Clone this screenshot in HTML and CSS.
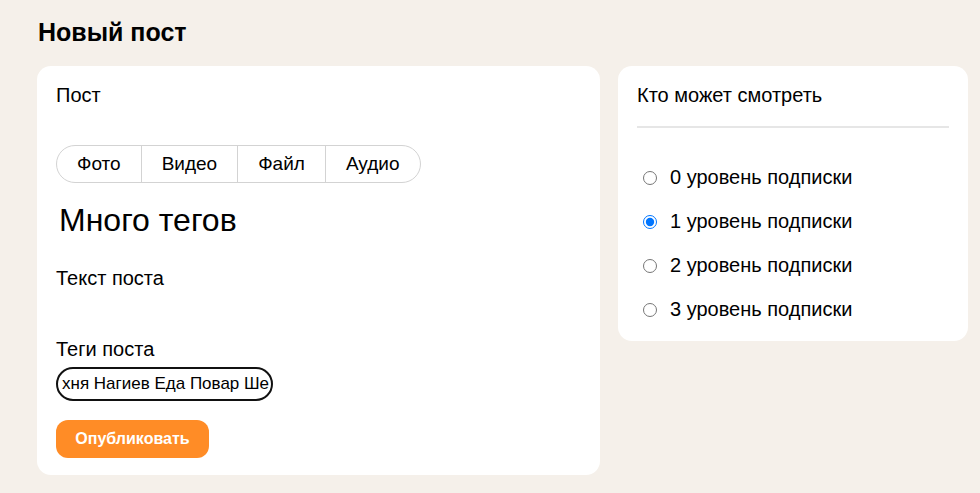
FILE: index.html
```html
<!DOCTYPE html>
<html lang="ru">
<head>
<meta charset="utf-8">
<link rel="stylesheet" href="styles.css">
</head>
<body>
<div class="page">
  <h1 class="title">Новый пост</h1>
  <div class="layout">
    <section class="card main">
      <div class="label">Пост</div>
      <div class="tabs">
        <div class="tab">Фото</div>
        <div class="tab">Видео</div>
        <div class="tab">Файл</div>
        <div class="tab">Аудио</div>
      </div>
      <div class="post-title">Много тегов</div>
      <div class="label text-label">Текст поста</div>
      <div class="label tags-label">Теги поста</div>
      <div class="tags-input"><span>хня Нагиев Еда Повар Ше</span></div>
      <button class="publish">Опубликовать</button>
    </section>
    <aside class="card side">
      <div class="side-title">Кто может смотреть</div>
      <div class="divider"></div>
      <div class="options">
        <label class="option"><input type="radio" name="lvl">0 уровень подписки</label>
        <label class="option"><input type="radio" name="lvl" checked>1 уровень подписки</label>
        <label class="option"><input type="radio" name="lvl">2 уровень подписки</label>
        <label class="option"><input type="radio" name="lvl">3 уровень подписки</label>
      </div>
    </aside>
  </div>
</div>
</body>
</html>
```

FILE: styles.css
```css
html, body {
  margin: 0;
  padding: 0;
  background: #f5f0ea;
  font-family: "Liberation Sans", Arial, sans-serif;
  color: #000;
}
.page {
  padding: 18px 12px 0 37px;
}
.title {
  margin: 0 0 19px 1px;
  font-size: 25px;
  font-weight: 700;
  line-height: 29px;
}
.layout {
  display: flex;
  align-items: flex-start;
  gap: 18px;
}
.card {
  background: #fff;
  border-radius: 14px;
  box-sizing: border-box;
}
.main {
  width: 563px;
  height: 409px;
  padding: 18px 19px;
}
.label {
  font-size: 20px;
  line-height: 23px;
}
.tabs {
  display: inline-flex;
  margin-top: 38px;
  border: 1px solid #d3d3d3;
  border-radius: 19px;
  height: 38px;
  box-sizing: border-box;
}
.tab {
  padding: 0 20px;
  font-size: 19px;
  line-height: 36px;
  border-left: 1px solid #d3d3d3;
}
.tab:first-child {
  border-left: none;
}
.post-title {
  margin: 19px 0 0 3px;
  font-size: 32px;
  line-height: 37px;
}
.text-label {
  margin-top: 28px;
}
.tags-label {
  margin-top: 48px;
}
.tags-input {
  margin-top: 6px;
  width: 217px;
  height: 34px;
  box-sizing: border-box;
  border: 2px solid #111;
  border-radius: 17px;
  padding: 0 4px;
  overflow: hidden;
  white-space: nowrap;
  font-size: 17px;
  line-height: 30px;
}
.publish {
  display: block;
  margin-top: 19px;
  height: 38px;
  width: 153px;
  padding: 0;
  border: none;
  border-radius: 12px;
  background: #ff8c26;
  color: #fff;
  font-family: "Liberation Sans", Arial, sans-serif;
  font-weight: 700;
  font-size: 16px;
}
.side {
  width: 350px;
  height: 275px;
  padding: 18px 19px;
}
.side-title {
  font-size: 20px;
  line-height: 23px;
}
.divider {
  margin-top: 19px;
  height: 2px;
  background: #e6e6e6;
}
.options {
  margin-top: 38px;
  display: flex;
  flex-direction: column;
  gap: 21px;
}
.option {
  display: flex;
  align-items: center;
  gap: 13px;
  font-size: 20px;
  line-height: 23px;
}
.option input {
  margin: 0 0 0 6px;
  width: 14px;
  height: 14px;
}
```
